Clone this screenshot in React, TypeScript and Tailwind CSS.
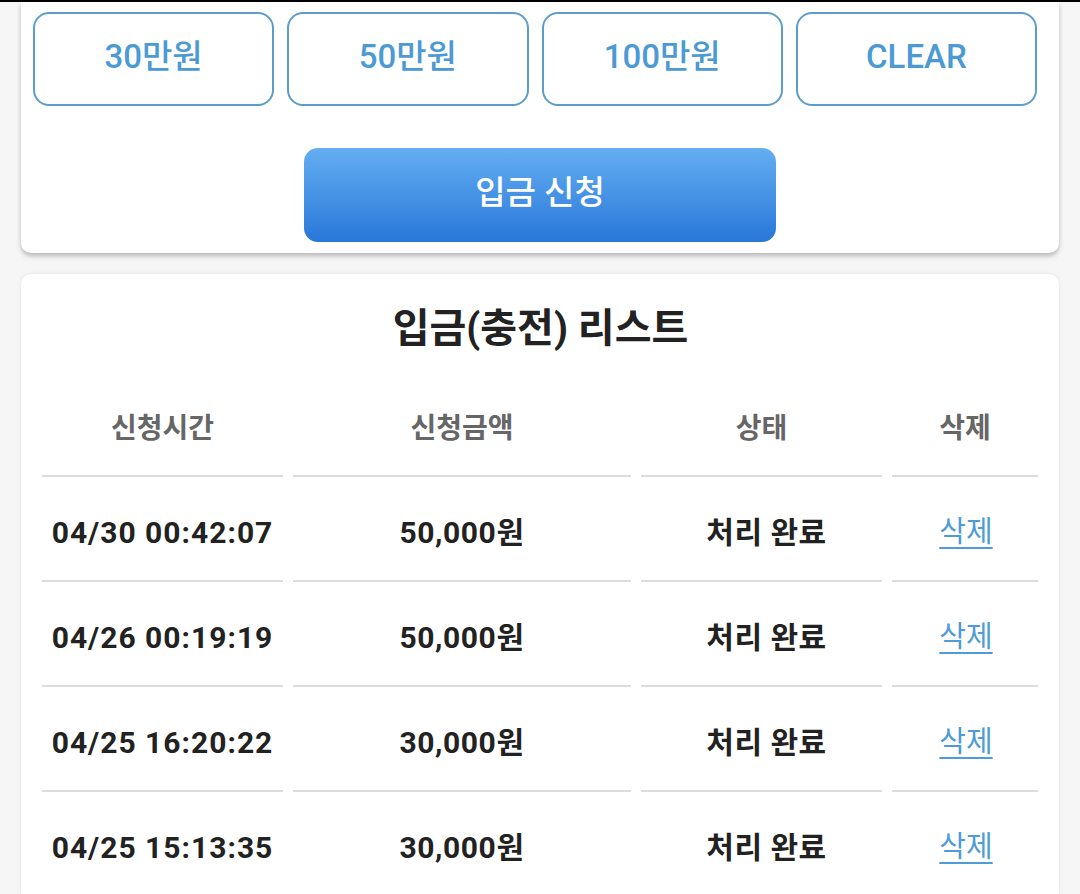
import React from 'react';

const AMOUNTS = ['30만원', '50만원', '100만원', 'CLEAR'];

const ROWS = [
  { time: '04/30 00:42:07', amount: '50,000원', status: '처리 완료' },
  { time: '04/26 00:19:19', amount: '50,000원', status: '처리 완료' },
  { time: '04/25 16:20:22', amount: '30,000원', status: '처리 완료' },
  { time: '04/25 15:13:35', amount: '30,000원', status: '처리 완료' },
];

const font = { fontFamily: 'Roboto, "Noto Sans CJK KR", sans-serif' };

const App: React.FC = () => {
  return (
    <div className="h-[894px] overflow-hidden bg-[#f6f6f6]" style={font}>
      <div className="h-[2px] bg-black" />

      {/* amount + submit card */}
      <div className="mx-[21px] rounded-b-[10px] bg-white pl-[12px] pr-[22px] pt-[10px] pb-[11px] shadow-[0_3px_5px_rgba(0,0,0,0.25)]">
        <div className="grid grid-cols-4 gap-x-[13px]">
          {AMOUNTS.map((a) => (
            <button
              key={a}
              className="h-[94px] rounded-[16px] border-2 border-[#5d9dcc] bg-white pb-[4px] text-[33px] font-medium text-[#4b9ad5]"
            >
              {a}
            </button>
          ))}
        </div>
        <div className="mt-[42px] flex justify-center pl-[10px]">
          <button className="h-[94px] w-[472px] rounded-[14px] bg-gradient-to-b from-[#64aef1] to-[#2777d9] pb-[4px] text-[33px] font-medium text-white">
            입금 신청
          </button>
        </div>
      </div>

      {/* list card */}
      <div className="mx-[21px] mt-[21px] rounded-t-[10px] bg-white pt-[28px] pl-[21px] pr-[20px] shadow-[0_0_4px_rgba(0,0,0,0.08)]">
        <h2 className="text-center text-[40px] font-bold leading-[54px] text-[#222]">입금(충전) 리스트</h2>

        <div className="mt-[53px] grid grid-cols-[241px_338px_241px_146px] gap-x-[10px] text-center">
          {['신청시간', '신청금액', '상태', '삭제'].map((h) => (
            <div
              key={h}
              className="border-b-2 border-[#dcdcdc] pb-[26px] text-[28px] font-bold leading-[40px] text-[#666]"
            >
              {h}
            </div>
          ))}

          {ROWS.map((r) => (
            <React.Fragment key={r.time}>
              <div className="flex h-[105px] items-center justify-center border-b-2 border-[#dcdcdc] pt-[8px] text-[30px] font-bold tracking-[1px] text-[#222]">
                {r.time}
              </div>
              <div className="flex h-[105px] items-center justify-center border-b-2 border-[#dcdcdc] pt-[8px] text-[30px] font-bold tracking-[0.6px] text-[#222]">
                {r.amount}
              </div>
              <div className="flex h-[105px] items-center justify-center border-b-2 border-[#dcdcdc] pt-[8px] pl-[10px] text-[30px] font-bold tracking-[0.5px] text-[#222]">
                {r.status}
              </div>
              <div className="flex h-[105px] items-center justify-center border-b-2 border-[#dcdcdc] pt-[8px] pl-[2px] text-[29px]">
                <a href="#" className="text-[#4d9bd8] underline underline-offset-[5px]">
                  삭제
                </a>
              </div>
            </React.Fragment>
          ))}
        </div>
      </div>
    </div>
  );
};

export default App;
